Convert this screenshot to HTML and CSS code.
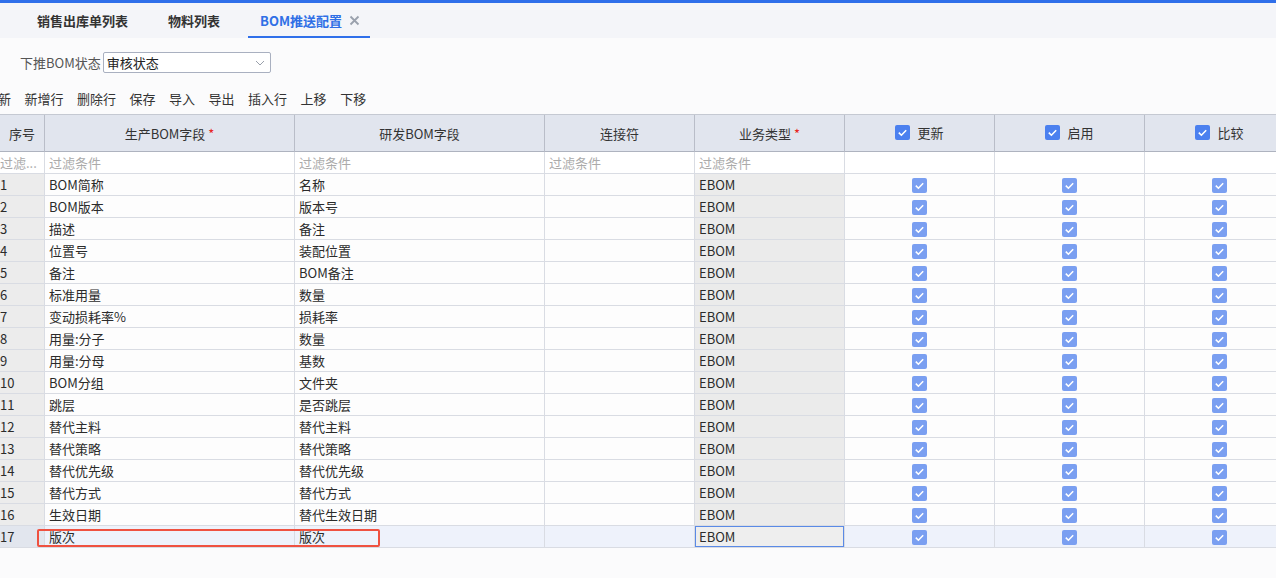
FILE: index.html
```html
<!DOCTYPE html>
<html lang="zh-CN">
<head>
<meta charset="utf-8">
<title>BOM推送配置</title>
<link rel="stylesheet" href="styles.css">
</head>
<body>
<div class="tabbar">
  <div class="tab">销售出库单列表</div>
  <div class="tab">物料列表</div>
  <div class="tab active">BOM推送配置<svg class="close" width="11" height="11" viewBox="0 0 11 11"><path d="M1.5 1.5l8 8M9.5 1.5l-8 8" stroke="#9aa1ad" stroke-width="1.8" fill="none"/></svg></div>
</div>
<div class="filter">
  <span class="flabel">下推BOM状态</span>
  <div class="select">审核状态<svg class="chev" width="10" height="6" viewBox="0 0 10 6"><path d="M1 1l4 4 4-4" fill="none" stroke="#9aa0ab" stroke-width="1"/></svg></div>
</div>
<div class="toolbar">
  <span class="tb first">新</span>
  <span class="tb">新增行</span>
  <span class="tb">删除行</span>
  <span class="tb">保存</span>
  <span class="tb">导入</span>
  <span class="tb">导出</span>
  <span class="tb">插入行</span>
  <span class="tb">上移</span>
  <span class="tb">下移</span>
</div>
<div class="gridwrap">
<table class="grid">
  <colgroup>
    <col class="c-no"><col class="c-wide"><col class="c-wide"><col class="c-mid"><col class="c-mid"><col class="c-mid"><col class="c-mid"><col class="c-mid">
  </colgroup>
  <thead>
    <tr>
      <th>序号</th>
      <th>生产BOM字段 <span class="req">*</span></th>
      <th>研发BOM字段</th>
      <th>连接符</th>
      <th>业务类型 <span class="req">*</span></th>
      <th><span class="hcb"><svg width="15" height="15" viewBox="0 0 15 15"><rect width="15" height="15" rx="2" fill="#4b80ef"/><path d="M3.8 7.6l2.6 2.6 4.8-5" fill="none" stroke="#fff" stroke-width="1.6"/></svg>更新</span></th>
      <th><span class="hcb"><svg width="15" height="15" viewBox="0 0 15 15"><rect width="15" height="15" rx="2" fill="#4b80ef"/><path d="M3.8 7.6l2.6 2.6 4.8-5" fill="none" stroke="#fff" stroke-width="1.6"/></svg>启用</span></th>
      <th><span class="hcb"><svg width="15" height="15" viewBox="0 0 15 15"><rect width="15" height="15" rx="2" fill="#4b80ef"/><path d="M3.8 7.6l2.6 2.6 4.8-5" fill="none" stroke="#fff" stroke-width="1.6"/></svg>比较</span></th>
    </tr>
  </thead>
  <tbody id="body">
    <tr class="frow">
      <td class="no ph">过滤...</td>
      <td class="ph">过滤条件</td>
      <td class="ph">过滤条件</td>
      <td class="ph">过滤条件</td>
      <td class="ph">过滤条件</td>
      <td></td><td></td><td></td>
    </tr>
  </tbody>
</table>
<div class="mark"></div>
</div>
<script>
var rows=[["BOM简称","名称"],["BOM版本","版本号"],["描述","备注"],["位置号","装配位置"],["备注","BOM备注"],["标准用量","数量"],["变动损耗率%","损耗率"],["用量:分子","数量"],["用量:分母","基数"],["BOM分组","文件夹"],["跳层","是否跳层"],["替代主料","替代主料"],["替代策略","替代策略"],["替代优先级","替代优先级"],["替代方式","替代方式"],["生效日期","替代生效日期"],["版次","版次"]];
var cb='<svg width="15" height="15" viewBox="0 0 15 15"><rect width="15" height="15" rx="2" fill="#7a9ff1"/><path d="M3.8 7.6l2.6 2.6 4.8-5" fill="none" stroke="#fff" stroke-width="1.6"/></svg>';
var tb=document.getElementById('body');
rows.forEach(function(r,i){
  var tr=document.createElement('tr');
  if(i===rows.length-1) tr.className='sel';
  tr.innerHTML='<td class="no">'+(i+1)+'</td><td>'+r[0]+'</td><td>'+r[1]+'</td><td></td><td class="type'+(i===rows.length-1?' edit':'')+'">EBOM</td><td class="cb">'+cb+'</td><td class="cb">'+cb+'</td><td class="cb">'+cb+'</td>';
  tb.appendChild(tr);
});
</script>
</body>
</html>
```
FILE: styles.css
```css
html, body {
  margin: 0;
  padding: 0;
}
body {
  width: 1276px;
  height: 578px;
  overflow: hidden;
  background: #fbfbfc;
  font-family: "Noto Sans CJK SC", "Noto Sans", sans-serif;
  font-size: 13px;
  color: #333;
  border-top: 3px solid #2f6fea;
  box-sizing: border-box;
}
.tabbar {
  height: 35px;
  background: #f4f5f9;
  display: flex;
  align-items: stretch;
  gap: 16px;
  padding-left: 25px;
}
.tab {
  padding: 0 12px;
  font-weight: bold;
  color: #333;
  display: flex;
  align-items: center;
  border-bottom: 2px solid transparent;
  box-sizing: border-box;
  padding-top: 2px;
}
.tab.active {
  color: #2f6fe6;
  border-bottom-color: #2f6fea;
  padding-right: 10px;
}
.close {
  margin-left: 7px;
  display: block;
}
.filter {
  display: flex;
  align-items: center;
  margin-top: 14px;
  padding-left: 20px;
  height: 21px;
}
.flabel {
  color: #555;
  margin-right: 2px;
}
.select {
  width: 168px;
  height: 21px;
  box-sizing: border-box;
  border: 1px solid #a9b0c0;
  border-radius: 2px;
  background: #fff;
  display: flex;
  align-items: center;
  padding-left: 3px;
  color: #222;
  position: relative;
}
.chev {
  position: absolute;
  right: 5px;
  top: 7px;
}
.toolbar {
  display: flex;
  align-items: center;
  height: 24px;
  margin-top: 13px;
  gap: 13.5px;
  color: #333;
}
.tb.first {
  margin-left: -2px;
}
.gridwrap {
  position: relative;
  margin-top: 4px;
}
.grid {
  border-collapse: separate;
  border-spacing: 0;
  table-layout: fixed;
  width: 1295px;
  border-top: 1px solid #c5c9d2;
}
.c-no { width: 45px; }
.c-wide { width: 250px; }
.c-mid { width: 150px; }
.grid th {
  background: #e1e5ee;
  font-weight: normal;
  color: #333;
  padding: 0;
  border-right: 1px solid #b9bdc8;
  border-bottom: 1px solid #aeb3bf;
  text-align: center;
  box-sizing: border-box;
}
.grid thead th {
  height: 37px;
}
.req {
  color: #e8231c;
}
.hcb {
  display: inline-flex;
  align-items: center;
  gap: 7px;
}
.hcb svg {
  display: block;
}
.grid td {
  height: 22px;
  box-sizing: border-box;
  padding: 0 4px;
  line-height: 21px;
  border-right: 1px solid #d9dce3;
  border-bottom: 1px solid #d9dce3;
  background: #fdfdfd;
  white-space: nowrap;
  overflow: hidden;
  color: #2b2b2b;
}
.grid td.no {
  background: #ececec;
  padding-left: 0;
  text-overflow: ellipsis;
}
.grid .frow td {
  background: #fff;
}
.grid .frow td.no {
  background: #fff;
}
.grid td.ph {
  color: #ababab;
}
.grid td.type {
  background: #ebebeb;
}
.grid td.cb {
  text-align: center;
  padding: 0;
}
.grid td.cb svg {
  display: inline-block;
  vertical-align: middle;
  margin-top: -2px;
}
.grid tr.sel td {
  background: #eef2fb;
}
.grid tr.sel td.no {
  background: #e2e6ee;
}
.grid tr.sel td.type {
  background: #eeeeee;
  box-shadow: inset 0 0 0 1px #5a8ae6;
}
.mark {
  position: absolute;
  left: 37px;
  top: 415px;
  width: 343px;
  height: 18px;
  box-sizing: border-box;
  border: 2px solid #ef5140;
  border-radius: 2px;
}
```
